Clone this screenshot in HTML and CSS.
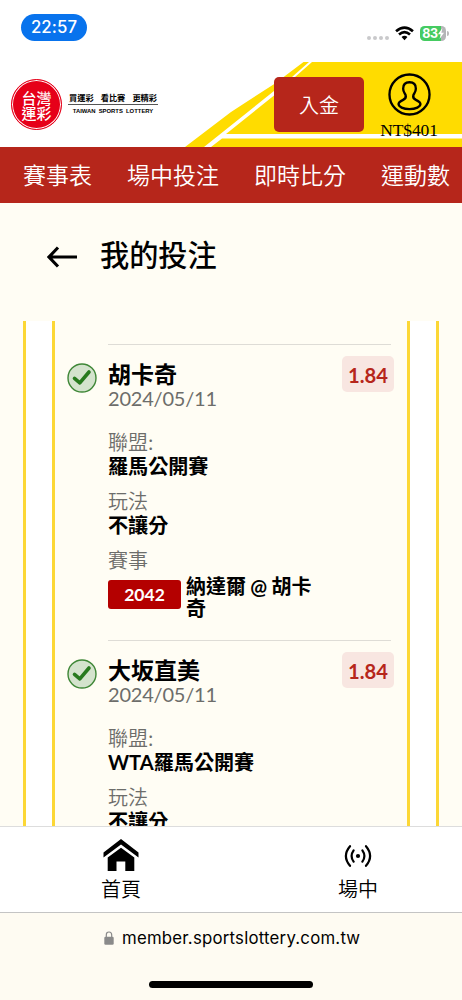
FILE: index.html
```html
<!DOCTYPE html>
<html lang="zh-Hant">
<head>
<meta charset="utf-8">
<meta name="viewport" content="width=device-width, initial-scale=1">
<title>我的投注</title>
<link rel="stylesheet" href="styles.css">
</head>
<body>
<div class="status">
  <span class="clock">22:57</span>
  <div class="indicators">
    <span class="dots"><i></i><i></i><i></i><i></i></span>
    <svg class="wifi" viewBox="0 0 18 14"><g fill="none" stroke="#000" stroke-width="2.5"><path d="M1 4.9Q9-2.2 17 4.9"/><path d="M3.8 8Q9 3.4 14.2 8"/></g><path d="M6.2 10.3Q9 8 11.8 10.3L9 13.4Z"/></svg>
    <span class="battery">83<svg viewBox="0 0 6 11"><path d="M4.4 0L0 6.2h2.6L1.6 11L6 4.8H3.4Z" fill="#fff"/></svg></span>
    <span class="battery-cap"></span>
  </div>
</div>
<header class="banner">
  <svg class="banner-bg" viewBox="0 0 462 85"><path fill="#ffdc00" d="M303.500 0H462V85H185L231 50L275 21.500Z"/><path fill="#fff" d="M309 0h3L295 15L274 33.500L226 72H462V76.500H222L211 85H204L274 29L292 15Z"/></svg>
  <div class="brand">
    <div class="seal"><span>台灣</span><span>運彩</span></div>
    <div class="slogan">
      <div class="slogan-zh"><span>買運彩</span><span>看比賽</span><span>更精彩</span></div>
      <div class="slogan-en">TAIWAN SPORTS LOTTERY</div>
    </div>
  </div>
  <button class="deposit">入金</button>
  <div class="account">
    <svg viewBox="0 0 44 44" fill="none" stroke="#000" stroke-width="2.4"><circle cx="22" cy="22" r="20.500"/><path stroke-linejoin="round" d="M22 9.500C17 9.500 15.500 12.500 15.500 16C15.500 19 17 20.500 18 22.500C18.800 25 17.500 26.500 15.500 27.500C12.500 29 10.800 30 10.800 31.800C10.800 34.500 15.500 37 22 37S33.200 34.500 33.200 31.800C33.200 30 31.500 29 28.500 27.500C26.500 26.500 25.200 25 26 22.500C27 20.500 28.500 19 28.500 16C28.500 12.500 27 9.500 22 9.500Z"/></svg>
    <span>NT$401</span>
  </div>
</header>
<nav class="nav"><a>賽事表</a><a>場中投注</a><a>即時比分</a><a>運動數</a></nav>
<main class="page">
  <div class="heading">
    <svg viewBox="0 0 30 22" fill="none" stroke="#000" stroke-width="3.1"><path d="M30 11H2M11 1.500L2 11L11 20.500"/></svg>
    <h1>我的投注</h1>
  </div>
  <div class="outer-card">
    <div class="slip">
      <section class="bet">
        <svg class="check" viewBox="0 0 30 30"><circle cx="15" cy="15" r="14" fill="#d4e3cd" stroke="#3f8737" stroke-width="1.400"/><path d="M7.500 15.300L12.800 19.800L22 9" fill="none" stroke="#287a1e" stroke-width="3.600" stroke-linecap="round" stroke-linejoin="round"/></svg>
        <div class="details">
          <h2>胡卡奇</h2><div class="date">2024/05/11</div>
          <div class="label">聯盟:</div><div class="value">羅馬公開賽</div>
          <div class="label">玩法</div><div class="value">不讓分</div>
          <div class="label">賽事</div>
          <div class="match"><span class="code">2042</span><span class="teams">納達爾 @ 胡卡奇</span></div>
        </div>
        <span class="odds">1.84</span>
      </section>
      <section class="bet">
        <svg class="check" viewBox="0 0 30 30"><circle cx="15" cy="15" r="14" fill="#d4e3cd" stroke="#3f8737" stroke-width="1.400"/><path d="M7.500 15.300L12.800 19.800L22 9" fill="none" stroke="#287a1e" stroke-width="3.600" stroke-linecap="round" stroke-linejoin="round"/></svg>
        <div class="details">
          <h2>大坂直美</h2><div class="date">2024/05/11</div>
          <div class="label">聯盟:</div><div class="value">WTA羅馬公開賽</div>
          <div class="label">玩法</div><div class="value">不讓分</div>
        </div>
        <span class="odds">1.84</span>
      </section>
    </div>
  </div>
</main>
<div class="tabs">
  <a><svg class="home" viewBox="0 0 36 32"><path d="M18 0L35.500 13.500V18.500L18 5.500L.5 18.500V13.500Z"/><path d="M18 8.800L31.300 18.500V32H22.300V22.500H13.500V32H4.700V18.500Z"/></svg><span>首頁</span></a>
  <a><svg class="live" viewBox="0 0 28 22" fill="none" stroke="#000" stroke-width="2.200" stroke-linecap="round"><circle cx="14" cy="11" r="2.100" fill="#000" stroke="none"/><path d="M9.600 5.300Q5.600 11 9.600 16.700M18.400 5.300Q22.400 11 18.400 16.700M6 1.200Q-2.200 11 6 20.800M22 1.200Q30.200 11 22 20.800"/></svg><span>場中</span></a>
</div>
<footer class="address">
  <div class="url"><svg viewBox="0 0 10 14"><path d="M2.300 6V4Q2.300 1 5 1T7.700 4V6" fill="none" stroke="#8a8a8a" stroke-width="1.200"/><rect x=".3" y="5.800" width="9.400" height="8" rx="1.300" fill="#8a8a8a"/></svg><span>member.sportslottery.com.tw</span></div>
  <div class="handle"></div>
</footer>
</body>
</html>
```

FILE: styles.css
```css
* { box-sizing: border-box; }
body { margin: 0; width: 462px; height: 1000px; overflow: hidden; display: flex; flex-direction: column; background: #fffdf4; color: #000; font-family: Lato, "Noto Sans CJK TC", sans-serif; }
h1, h2 { margin: 0; }
svg { display: block; flex: none; }
.status { flex: none; height: 62px; background: #fff; display: flex; justify-content: space-between; align-items: flex-start; padding: 14px 13px 0 21px; }
.clock { width: 66px; height: 27px; border-radius: 14px; background: #0873ed; color: #fff; text-align: center; font: 500 16.800px/27px Inter, sans-serif; letter-spacing: .1px; }
.indicators { display: flex; align-items: center; padding-top: 11px; height: 28px; }
.dots { display: flex; gap: 2px; padding-top: 9px; }
.dots i { width: 4px; height: 4px; border-radius: 50%; background: #c9c9cb; }
.wifi { width: 19px; height: 15px; margin: 0 6px; }
.battery { display: flex; align-items: center; justify-content: center; width: 26px; height: 15px; border-radius: 4.500px; background: linear-gradient(90deg, #45cb61 82%, #b5b5b7 82%); color: #fff; font: 700 12.500px/15px Inter, sans-serif; letter-spacing: -.3px; }
.battery svg { width: 6px; height: 11px; }
.battery-cap { width: 2px; height: 5px; margin-left: 1px; border-radius: 0 2px 2px 0; background: #bbb; }
.banner { position: relative; flex: none; height: 85px; background: #fff; display: flex; padding: 15px 24px 0 11px; }
.banner-bg { position: absolute; inset: 0; width: 462px; height: 85px; }
.brand { position: relative; display: flex; gap: 6px; width: 263px; }
.seal { width: 51px; height: 51px; margin-top: 2px; border: 1.500px solid #e60019; border-radius: 50%; background: #e60019; box-shadow: inset 0 0 0 1px #fff; color: #fff; display: flex; flex-direction: column; align-items: center; justify-content: center; font: 500 15px/15px "Noto Sans CJK TC", sans-serif; }
.slogan { width: 90px; margin-top: 14px; font-family: "Noto Sans CJK TC", sans-serif; }
.slogan-zh { display: flex; justify-content: space-between; height: 14px; padding: 0 1px; border-bottom: 1px solid #555; font-size: 8.200px; font-weight: 700; line-height: 13px; }
.slogan-en { font: 700 5.900px/10px "Liberation Sans", sans-serif; text-align: center; white-space: nowrap; word-spacing: 1.500px; padding-top: 1px; }
.deposit { position: relative; width: 90px; height: 55px; border: 0; border-radius: 5px; background: #b6261b; color: #fff; font: 350 20px/55px "Noto Sans CJK TC", sans-serif; padding: 0; }
.account { position: relative; width: 58px; margin: -4px 0 0 16px; display: flex; flex-direction: column; align-items: center; }
.account svg { width: 43px; height: 43px; }
.account span { font: 17.500px/20px "Liberation Serif", serif; margin-top: 4px; letter-spacing: -.1px; }
.nav { flex: none; height: 56px; background: #b6261b; color: #fff; display: flex; gap: 35px; padding-left: 23px; font-size: 23px; font-weight: 350; line-height: 56px; white-space: nowrap; }
.page { flex: none; height: 623px; overflow: hidden; }
.heading { display: flex; align-items: center; gap: 23px; height: 118px; padding: 0 0 12px 47px; }
.heading svg { width: 30px; height: 22px; margin-top: 2px; }
h1 { font-size: 29.200px; font-weight: 500; line-height: 40px; margin-top: -2px; }
.outer-card { margin: 0 23px; height: 505px; border: solid #fcd735; border-width: 0 3px; background: #fff; padding: 0 26px; }
.slip { height: 505px; border: solid #fcd735; border-width: 0 3px; background: #fffdf4; padding: 23px 16px 0 12px; }
.bet { display: flex; height: 295.500px; position: relative; }
.check { width: 30px; height: 30px; margin: 19px 11px 0 0; }
.details { flex: 1; border-top: 1px solid #dedcd6; padding-top: 15px; white-space: nowrap; }
h2 { font-size: 23px; font-weight: 700; line-height: 28px; }
.date { color: #6d6d6a; font-size: 20px; line-height: 20px; height: 42px; letter-spacing: -.2px; }
.label { color: #6d6d6a; font-family: "Noto Sans CJK TC", sans-serif; font-size: 20px; font-weight: 350; line-height: 24px; }
.value { font-size: 20.100px; font-weight: 700; line-height: 25px; margin-bottom: 10px; }
.match { display: flex; gap: 5px; align-items: center; }
.code { width: 73px; height: 29px; border-radius: 3px; background: #b40000; color: #fff; text-align: center; font-size: 17.500px; font-weight: 700; line-height: 29px; }
.teams { width: 130px; padding-top: 3px; margin-bottom: -3px; white-space: normal; font-size: 20px; font-weight: 700; line-height: 22px; word-spacing: -.5px; }
.odds { position: absolute; right: -3px; top: 12px; width: 52px; height: 36px; border-radius: 5px; background: #f8e6e1; color: #b6261b; font-size: 20.200px; font-weight: 700; line-height: 39px; text-align: center; }
.tabs { flex: none; height: 87px; background: #fff; border-top: 1px solid #ddd; border-bottom: 1px solid #c4c4c4; display: flex; padding-left: 2.500px; }
.tabs a { flex: none; width: 237px; display: flex; flex-direction: column; align-items: center; font-size: 20px; font-weight: 350; }
.tabs span { line-height: 29px; }
.home { width: 36px; height: 32px; margin: 12px 0 4px; }
.live { width: 28px; height: 22px; margin: 18px 0 8px; }
.address { flex: 1; background: #fefbf2; padding-top: 13px; }
.url { display: flex; gap: 8px; margin-left: 104px; align-items: center; font: 16.800px/24px Inter, sans-serif; letter-spacing: .22px; }
.url svg { width: 10px; height: 14px; }
.handle { width: 164px; height: 7px; margin: 31px 0 0 149px; border-radius: 4px; background: #000; }
```
